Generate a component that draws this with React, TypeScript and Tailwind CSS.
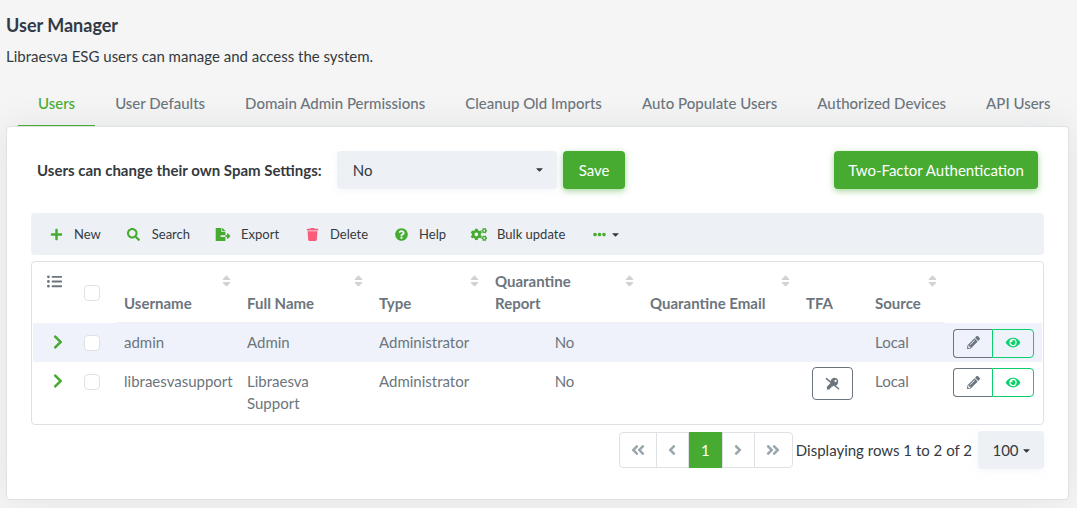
import { useState } from "react";
import type { ComponentType } from "react";
import {
  FaAngleDoubleLeft,
  FaAngleDoubleRight,
  FaAngleLeft,
  FaAngleRight,
  FaCaretDown,
  FaChevronRight,
  FaCogs,
  FaEllipsisH,
  FaEye,
  FaFileExport,
  FaListUl,
  FaPencilAlt,
  FaPlus,
  FaQuestionCircle,
  FaSearch,
  FaTrash,
} from "react-icons/fa";

const TABS = [
  "Users",
  "User Defaults",
  "Domain Admin Permissions",
  "Cleanup Old Imports",
  "Auto Populate Users",
  "Authorized Devices",
  "API Users",
];

type Action = {
  label: string;
  icon: ComponentType<{ className?: string }>;
  style: string;
};

const ACTIONS: Action[] = [
  { label: "New", icon: FaPlus, style: "h-[13px] w-[13px] text-[#47ab31]" },
  { label: "Search", icon: FaSearch, style: "h-[13px] w-[13px] text-[#47ab31]" },
  { label: "Export", icon: FaFileExport, style: "h-[13px] w-4 text-[#47ab31]" },
  { label: "Delete", icon: FaTrash, style: "h-[13px] w-[13px] text-[#fa5c7c]" },
  { label: "Help", icon: FaQuestionCircle, style: "h-[13px] w-[13px] text-[#47ab31]" },
  { label: "Bulk update", icon: FaCogs, style: "h-[13px] w-[18px] text-[#47ab31]" },
];

const COLUMNS = [
  { label: "Username", width: "w-[123px]", sortable: true },
  { label: "Full Name", width: "w-[132px]", sortable: true },
  { label: "Type", width: "w-[116px]", sortable: true },
  { label: "Quarantine Report", width: "w-[155px]", sortable: true },
  { label: "Quarantine Email", width: "", sortable: true },
  { label: "TFA", width: "w-[69px]", sortable: false },
  { label: "Source", width: "w-[78px]", sortable: true },
];

const USERS = [
  { username: "admin", fullName: "Admin", type: "Administrator", report: "No", email: "", tfa: false, source: "Local" },
  { username: "libraesvasupport", fullName: "Libraesva Support", type: "Administrator", report: "No", email: "", tfa: true, source: "Local" },
];

function KeySlash() {
  return (
    <svg viewBox="0 0 16 16" className="h-[15px] w-[15px]" fill="currentColor" aria-hidden>
      <path
        fillRule="evenodd"
        d="M10.300 1.800a4.200 4.200 0 0 0-4.100 5.500L2 11.500v2.900h3.200v-1.600h1.600v-1.600h1.400l.9-.8A4.300 4.300 0 1 0 10.300 1.800zm1 2.300a1.200 1.200 0 1 1 0 2.400 1.200 1.200 0 0 1 0-2.400z"
      />
      <path d="M1.500 2.800 14.500 13.600" stroke="currentColor" strokeWidth="1.600" strokeLinecap="round" />
    </svg>
  );
}

function SortArrows() {
  return (
    <svg
      viewBox="0 0 9 12"
      className="mt-[5px] h-3 w-[9px] shrink-0 self-start text-[#d0d3d6]"
      fill="currentColor"
      stroke="currentColor"
      strokeLinejoin="round"
      aria-hidden
    >
      <path d="M1 4.500h7L4.500.8z" />
      <path d="M1 7.500h7l-3.500 3.700z" />
    </svg>
  );
}

function Checkbox({ label }: { label: string }) {
  return (
    <input
      type="checkbox"
      aria-label={label}
      className="block h-4 w-4 appearance-none rounded border border-[#dee2e6] bg-white checked:border-[#47ab31] checked:bg-[#47ab31]"
    />
  );
}

function Tabs() {
  const [active, setActive] = useState(TABS[0]);

  return (
    <nav className="flex px-3">
      {TABS.map((tab) => (
        <button
          key={tab}
          onClick={() => setActive(tab)}
          className={
            tab === active
              ? "border-b border-[#47ab31] px-5 pt-3 pb-[11px] font-medium whitespace-nowrap text-[#47ab31]"
              : "border-b border-transparent px-5 pt-3 pb-[11px] font-medium whitespace-nowrap text-[#6c757d]"
          }
        >
          {tab}
        </button>
      ))}
    </nav>
  );
}

function Toolbar() {
  return (
    <div className="mt-6 flex h-[42px] items-center rounded bg-[#edf0f5] px-1 text-[13px]">
      {ACTIONS.map(({ label, icon: Icon, style }) => (
        <button key={label} className="flex items-center gap-[9px] px-3 py-2">
          <span className="flex w-[18px] justify-center">
            <Icon className={style} />
          </span>
          {label}
        </button>
      ))}
      <button aria-label="More actions" className="flex items-center gap-[6px] px-4 py-2">
        <FaEllipsisH className="h-[13px] w-[13px] text-[#47ab31]" />
        <FaCaretDown className="h-[11px] w-[7px]" />
      </button>
    </div>
  );
}

function UsersTable() {
  return (
    <div className="mt-[6px] rounded border border-[#dee2e6] p-px text-[#6c757d]">
      <table className="w-full table-fixed text-left">
        <thead>
          <tr>
            <th className="w-[41px] pt-[11px] pl-[14px] align-top">
              <FaListUl aria-label="Columns" className="h-[15px] w-[15px]" />
            </th>
            <th className="w-[42px] pl-[10px] align-middle">
              <Checkbox label="Select all users" />
            </th>
            {COLUMNS.map(({ label, width, sortable }) => (
              <th
                key={label}
                className={`${width} border-b border-[#eef2f7] px-2 pt-[7px] pb-2 align-bottom font-bold`}
              >
                <div className="flex min-h-11 items-end justify-between gap-[7px]">
                  {label}
                  {sortable && <SortArrows />}
                </div>
              </th>
            ))}
            <th className="w-[97px]" />
          </tr>
        </thead>
        <tbody>
          {USERS.map((user) => (
            <tr key={user.username} className="align-top odd:bg-[#eff2fa]">
              <td className="pt-[11px] pl-5">
                <button aria-label={`Expand ${user.username}`} className="block text-[#47ab31]">
                  <FaChevronRight className="h-4 w-[10px]" />
                </button>
              </td>
              <td className="pt-3 pl-[10px]">
                <Checkbox label={`Select ${user.username}`} />
              </td>
              <td className="p-2">{user.username}</td>
              <td className="p-2 pb-[9px]">{user.fullName}</td>
              <td className="p-2">{user.type}</td>
              <td className="p-2 text-center">{user.report}</td>
              <td className="p-2">{user.email}</td>
              <td className="pt-[5px] text-center">
                {user.tfa && (
                  <button
                    aria-label="Disable TFA"
                    className="inline-flex h-[33px] w-[41px] items-center justify-center rounded-sm border border-[#6c757d]"
                  >
                    <KeySlash />
                  </button>
                )}
              </td>
              <td className="p-2">{user.source}</td>
              <td className="px-2 pt-[6px] pb-1">
                <div className="flex h-[29px]">
                  <button
                    aria-label={`Edit ${user.username}`}
                    className="flex w-[39px] items-center justify-center rounded-l-sm border border-r-0 border-[#6c757d] pb-px"
                  >
                    <FaPencilAlt className="h-[13px] w-[13px]" />
                  </button>
                  <button
                    aria-label={`View ${user.username}`}
                    className="flex flex-1 items-center justify-center rounded-r-sm border border-[#0acf6b] pb-px text-[#0acf6b]"
                  >
                    <FaEye className="h-[13px] w-4" />
                  </button>
                </div>
              </td>
            </tr>
          ))}
        </tbody>
      </table>
    </div>
  );
}

function Pagination() {
  return (
    <div className="mt-[6px] flex items-center justify-end gap-[6px]">
      <nav className="-mr-[3px] flex h-9 divide-x divide-[#dee2e6] rounded border border-[#dee2e6] text-[#98a6ad]">
        <button aria-label="First page" className="flex w-[37px] items-center justify-center">
          <FaAngleDoubleLeft className="h-4 w-4" />
        </button>
        <button aria-label="Previous page" className="flex w-8 items-center justify-center">
          <FaAngleLeft className="h-4 w-4" />
        </button>
        <button className="-my-px w-[34px] bg-[#47ab31] text-white">1</button>
        <button aria-label="Next page" className="flex w-8 items-center justify-center">
          <FaAngleRight className="h-4 w-4" />
        </button>
        <button aria-label="Last page" className="flex w-[37px] items-center justify-center">
          <FaAngleDoubleRight className="h-4 w-4" />
        </button>
      </nav>
      <span>Displaying rows 1 to 2 of 2</span>
      <button className="flex h-[38px] w-[66px] items-center justify-center gap-1 rounded-sm bg-[#edf0f5] shadow-[0_2px_6px_rgba(238,242,247,0.5)]">
        100
        <FaCaretDown className="h-[11px] w-[7px]" />
      </button>
    </div>
  );
}

export default function App() {
  return (
    <main className="min-h-screen bg-[#f5f5f5] pt-[14px] pr-2 pb-2 pl-[6px] font-['Lato',sans-serif] text-[15px] leading-[22px] text-[#343a40]">
      <h1 className="text-lg leading-[22px] font-bold text-[#313a46]">User Manager</h1>
      <p className="mt-[9px] mb-[13px]">Libraesva ESG users can manage and access the system.</p>

      <Tabs />

      <section className="rounded border border-[#dee2e6] bg-white px-6 pt-6 pb-[30px] shadow-[0_0_35px_rgba(154,161,171,0.2)]">
        <div className="flex items-center gap-[6px] px-[6px]">
          <label htmlFor="spam-settings" className="mr-[9px] font-bold">
            Users can change their own Spam Settings:
          </label>
          <div className="relative w-[220px]">
            <select
              id="spam-settings"
              defaultValue="No"
              className="block h-[38px] w-full appearance-none rounded-sm bg-[#edf0f5] px-4 shadow-[0_2px_6px_rgba(238,242,247,0.5)]"
            >
              <option>No</option>
              <option>Yes</option>
            </select>
            <FaCaretDown className="pointer-events-none absolute top-[13px] right-[14px] h-[11px] w-[7px]" />
          </div>
          <button className="h-[38px] rounded-sm bg-[#47ab31] px-4 text-white shadow-[0_2px_6px_rgba(71,171,49,0.5)]">
            Save
          </button>
          <button className="ml-auto h-[38px] rounded-sm bg-[#47ab31] px-[14px] text-white shadow-[0_2px_6px_rgba(71,171,49,0.5)]">
            Two-Factor Authentication
          </button>
        </div>

        <Toolbar />
        <UsersTable />
        <Pagination />
      </section>
    </main>
  );
}
